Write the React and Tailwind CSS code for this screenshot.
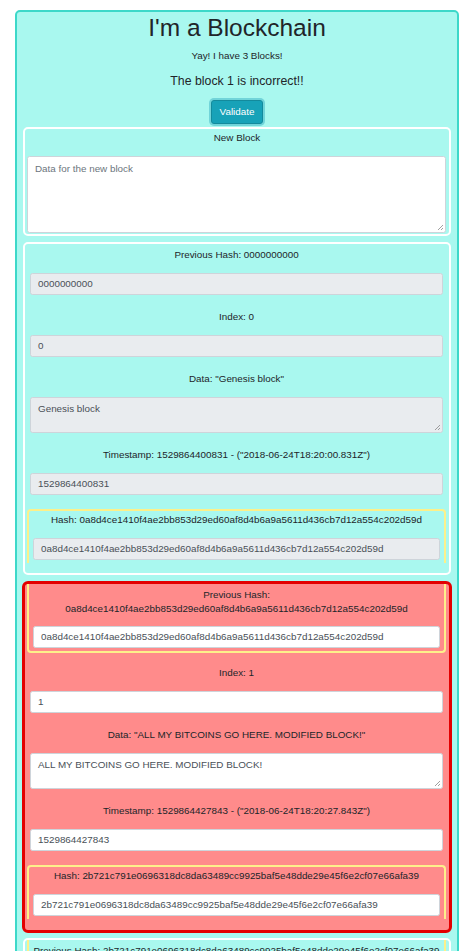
const font = { fontFamily: '"Liberation Sans", Arial, sans-serif' };

const Label = ({ children, className = '' }) => (
  <div className={`text-center text-[9.85px] leading-[14px] text-[#212529] mb-[11px] ${className}`}>{children}</div>
);

const Input = ({ value, disabled, className = '' }) => (
  <div
    className={`h-[22px] flex items-center px-[7px] text-[9.85px] text-[#495057] border border-[#ced4da] rounded-[2.5px] ${disabled ? 'bg-[#e9ecef]' : 'bg-white'} ${className}`}
  >
    {value}
  </div>
);

const Area = ({ value, disabled, className = '' }) => (
  <div
    className={`relative h-[36px] px-[7px] pt-[4px] text-[9.85px] text-[#495057] border border-[#ced4da] rounded-[2.5px] ${disabled ? 'bg-[#e9ecef]' : 'bg-white'} ${className}`}
  >
    {value}
    <Grip />
  </div>
);

const Grip = () => (
  <svg className="absolute right-[1px] bottom-[1px]" width="7" height="7" viewBox="0 0 7 7">
    <path d="M6 1 L1 6 M6 4 L4 6" stroke="#888" strokeWidth="0.8" />
  </svg>
);

const Block = ({ prev, prevLinked, index, data, ts, iso, hash, disabled }) => (
  <>
    {prevLinked ? (
      <div className="ml-[2px] mr-[3px] border-x-2 border-b-2 border-[#fdf08a] rounded-b-[4px] pt-[4px] px-[4px] pb-[3px]">
        <div className="text-center text-[9.85px] leading-[14px] text-[#212529] mb-[10px]">Previous Hash: {prev}</div>
        <Input value={prev} disabled={disabled} />
      </div>
    ) : (
      <div className="ml-[5px] mr-[6px]">
        <Label>Previous Hash: {prev}</Label>
        <Input value={prev} disabled={disabled} className="mb-[15px]" />
      </div>
    )}
    <div className={`ml-[5px] mr-[6px] ${prevLinked ? 'mt-[13px]' : ''}`}>
      <Label>Index: {index}</Label>
      <Input value={index} disabled={disabled} className="mb-[15px]" />
      <Label>Data: "{data}"</Label>
      <Area value={data} disabled={disabled} className="mb-[15px]" />
      <Label>
        Timestamp: {ts} - ("{iso}")
      </Label>
      <Input value={ts} disabled={disabled} className="mb-[14px]" />
    </div>
    <div className="ml-[2px] mr-[3px] border-x-2 border-t-2 border-[#fdf08a] rounded-t-[4px] pt-[2px] px-[4px] pb-[3px]">
      <Label>Hash: {hash}</Label>
      <Input value={hash} disabled={disabled} />
    </div>
  </>
);

const App = () => {
  return (
    <div className="min-h-[951px] bg-white pt-[10px] px-[15px] overflow-hidden h-[951px]" style={font}>
      <div className="border-2 border-[#3dd8c9] rounded-[5px] bg-[#a9f8ef] px-[6px] pb-[10px]">
        <h1 className="text-center text-[24.5px] leading-[29px] text-[#212529] pt-[1px] mb-[6px]">I'm a Blockchain</h1>
        <p className="text-center text-[9.85px] leading-[15px] text-[#212529] mb-[11px]">Yay! I have 3 Blocks!</p>
        <h5 className="text-center text-[12.3px] leading-[15px] text-[#212529] mb-[11px]">The block 1 is incorrect!!</h5>
        <div className="flex justify-center mb-[3px]">
          <button className="h-[24px] px-[8px] rounded-[3px] bg-[#17a2b8] border border-[#138a9c] text-white text-[9.85px] shadow-[0_0_0_2px_rgba(58,176,195,0.5)]">
            Validate
          </button>
        </div>

        <div className="border-2 border-white rounded-[5px] pt-[2px] pb-[1px]">
          <Label>New Block</Label>
          <div className="relative ml-[2px] mr-[3px] h-[77px] bg-white border border-[#ced4da] rounded-[2.5px] px-[7px] pt-[5px] text-[9.85px] text-[#6c757d]">
            Data for the new block
            <Grip />
          </div>
        </div>

        <div className="mt-[6px] border-2 border-white rounded-[5px] pt-[4px] pb-[10px]">
          <Block
            prev="0000000000"
            index="0"
            data="Genesis block"
            ts="1529864400831"
            iso="2018-06-24T18:20:00.831Z"
            hash="0a8d4ce1410f4ae2bb853d29ed60af8d4b6a9a5611d436cb7d12a554c202d59d"
            disabled
          />
        </div>

        <div className="mt-[6px] -mx-px border-[3px] border-[#e30000] rounded-[6px] bg-[#ff8b8b] pb-[11px]">
          <Block
            prevLinked
            prev="0a8d4ce1410f4ae2bb853d29ed60af8d4b6a9a5611d436cb7d12a554c202d59d"
            index="1"
            data="ALL MY BITCOINS GO HERE. MODIFIED BLOCK!"
            ts="1529864427843"
            iso="2018-06-24T18:20:27.843Z"
            hash="2b721c791e0696318dc8da63489cc9925baf5e48dde29e45f6e2cf07e66afa39"
          />
        </div>

        <div className="mt-[5px] border-2 border-white rounded-[5px]">
          <div className="ml-[2px] mr-[3px] border-x-2 border-[#fdf08a] pt-[4px] px-[4px] pb-[3px]">
            <div className="text-center whitespace-nowrap text-[9.85px] leading-[14px] text-[#212529] mb-[10px]">
              Previous Hash: 2b721c791e0696318dc8da63489cc9925baf5e48dde29e45f6e2cf07e66afa39
            </div>
            <Input value="2b721c791e0696318dc8da63489cc9925baf5e48dde29e45f6e2cf07e66afa39" />
          </div>
        </div>
      </div>
    </div>
  );
};

export default App;
